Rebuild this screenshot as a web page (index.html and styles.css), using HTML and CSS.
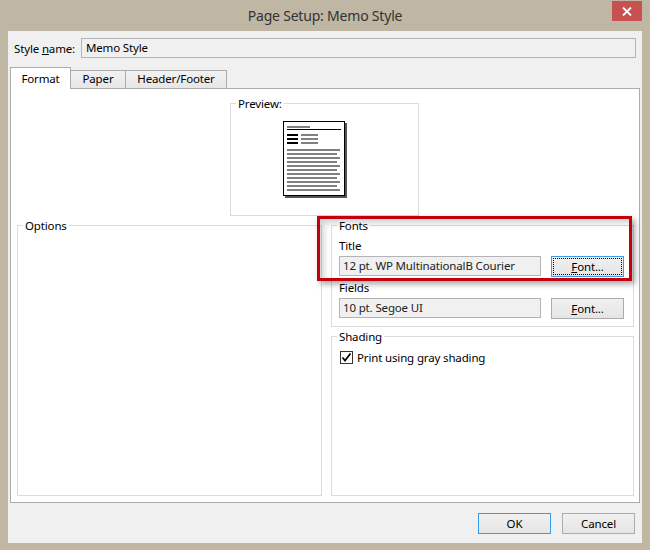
FILE: index.html
```html
<!DOCTYPE html>
<html>
<head>
<meta charset="utf-8">
<link rel="stylesheet" href="styles.css">
</head>
<body>
<div class="window">
  <div class="titlebar">
    <div class="title">Page Setup: Memo Style</div>
    <div class="close">
      <svg width="10" height="9" viewBox="0 0 10 9"><path d="M1 0.5 L9 8.5 M9 0.5 L1 8.5" stroke="#fff" stroke-width="1.8" fill="none"/></svg>
    </div>
  </div>
  <div class="client">
    <div class="style-row">
      <div class="style-label">Style <u>n</u>ame:</div>
      <div class="textbox style-box">Memo Style</div>
    </div>
    <div class="tabs">
      <div class="tab tab-format active">Format</div>
      <div class="tab tab-paper">Paper</div>
      <div class="tab tab-hf">Header/Footer</div>
    </div>
    <div class="panel">
      <fieldset class="group preview">
        <legend>Preview:</legend>
        <div class="group-body preview-body">
          <svg class="page-icon" width="64" height="77" viewBox="0 0 64 77">
            <rect x="2" y="2" width="62" height="75" fill="#555"/>
            <rect x="0.5" y="0.5" width="61" height="74" fill="#fff" stroke="#000" stroke-width="1"/>
            <rect x="4" y="5" width="23" height="2" fill="#808080"/>
            <rect x="4" y="8" width="54" height="1" fill="#000"/>
            <rect x="4" y="13" width="11" height="2" fill="#000"/>
            <rect x="4" y="17" width="11" height="2" fill="#000"/>
            <rect x="4" y="21" width="11" height="2" fill="#000"/>
            <rect x="18" y="13" width="17" height="2" fill="#808080"/>
            <rect x="18" y="17" width="17" height="2" fill="#808080"/>
            <rect x="18" y="21" width="17" height="2" fill="#808080"/>
            <rect x="4" y="28" width="53" height="2" fill="#808080"/>
            <rect x="4" y="32" width="50" height="2" fill="#808080"/>
            <rect x="4" y="36" width="53" height="2" fill="#808080"/>
            <rect x="4" y="40" width="50" height="2" fill="#808080"/>
            <rect x="4" y="44" width="53" height="2" fill="#808080"/>
            <rect x="4" y="48" width="50" height="2" fill="#808080"/>
            <rect x="4" y="52" width="53" height="2" fill="#808080"/>
            <rect x="4" y="56" width="50" height="2" fill="#808080"/>
            <rect x="4" y="60" width="53" height="2" fill="#808080"/>
            <rect x="4" y="64" width="50" height="2" fill="#808080"/>
            <rect x="4" y="68" width="53" height="2" fill="#808080"/>
          </svg>
        </div>
      </fieldset>
      <div class="cols">
        <fieldset class="group options">
          <legend>Options</legend>
        </fieldset>
        <div class="rightcol">
          <fieldset class="group fonts">
            <legend>Fonts</legend>
            <div class="group-body fonts-body">
              <div class="field-label">Title</div>
              <div class="font-row">
                <div class="textbox font-box">12 pt. WP MultinationalB Courier</div>
                <button class="btn focused"><span class="focus-ring"><u>F</u>ont...</span></button>
              </div>
              <div class="field-label second">Fields</div>
              <div class="font-row">
                <div class="textbox font-box">10 pt. Segoe UI</div>
                <button class="btn"><span class="btn-text"><u>F</u>ont...</span></button>
              </div>
            </div>
          </fieldset>
          <fieldset class="group shading">
            <legend>Shading</legend>
            <div class="group-body shading-body">
              <div class="check-row">
                <span class="checkbox">
                  <svg width="11" height="11" viewBox="0 0 11 11"><path d="M1.5 5.5 L4 8.5 L9.5 1.5" stroke="#000" stroke-width="1.8" fill="none"/></svg>
                </span>
                <span class="check-label">Print using <u>g</u>ray shading</span>
              </div>
            </div>
          </fieldset>
        </div>
      </div>
      <div class="highlight"></div>
    </div>
    <div class="buttons">
      <button class="btn default"><span class="btn-text">OK</span></button>
      <button class="btn"><span class="btn-text">Cancel</span></button>
    </div>
  </div>
</div>
</body>
</html>
```

FILE: styles.css
```css
* { box-sizing: border-box; }
html, body { margin: 0; padding: 0; }
body {
  font-family: "Noto Sans", "Open Sans", sans-serif;
  font-size: 11.5px;
  letter-spacing: -0.15px;
  color: #000;
  background: #bfb6a3;
}
.window {
  width: 650px;
  height: 550px;
  background: #bfb6a3;
  padding: 0 8px 7px 8px;
  display: flex;
  flex-direction: column;
}
.titlebar {
  height: 31px;
  flex: none;
  display: grid;
  grid-template-columns: 1fr auto 1fr;
}
.title {
  grid-column: 2;
  font-size: 14px;
  letter-spacing: -0.2px;
  line-height: 31px;
  color: #333;
}
.close {
  grid-column: 3;
  justify-self: end;
  align-self: start;
  margin-top: 1px;
  width: 30px;
  height: 20px;
  background: #c75050;
  display: flex;
  align-items: center;
  justify-content: center;
}
.close svg { display: block; }
.client {
  flex: 1;
  background: #f0f0f0;
  padding-top: 7px;
  display: flex;
  flex-direction: column;
}
.style-row {
  display: flex;
  align-items: center;
  margin: 0 6px;
}
.style-label { width: 67px; flex: none; }
.textbox {
  height: 20px;
  border: 1px solid #b4b4b4;
  background: #f0f0f0;
  padding: 0 4px;
  line-height: 18px;
  white-space: nowrap;
  overflow: hidden;
}
.style-box { flex: 1; }
.tabs {
  display: flex;
  align-items: flex-end;
  margin: 9px 2px 0;
}
.tab {
  height: 18px;
  border: 1px solid #acacac;
  border-bottom: none;
  background: linear-gradient(#f2f2f2, #e6e6e6);
  text-align: center;
  line-height: 16px;
  margin-left: -1px;
}
.tab.active {
  height: 22px;
  margin-left: 0;
  margin-bottom: -1px;
  background: #fff;
  line-height: 21px;
  position: relative;
  z-index: 1;
}
.tab-format { width: 61px; }
.tab-paper { width: 56px; }
.tab-hf { width: 102px; }
.panel {
  flex: none;
  height: 415px;
  margin: 0 2px;
  border: 1px solid #acacac;
  background: #fff;
  padding: 7px 5px 6px 6px;
  position: relative;
  display: flex;
  flex-direction: column;
}
fieldset.group {
  margin: 0;
  padding: 0;
  border: 1px solid #dcdcdc;
  min-width: 0;
}
fieldset.group legend {
  padding: 0 2px;
  margin-left: 5px;
  line-height: 15px;
}
fieldset.preview {
  width: 189px;
  align-self: flex-start;
  margin-left: 213px;
}
.preview-body { padding: 10px 0 17px 52px; }
.page-icon { display: block; }
.cols {
  flex: 1;
  margin-top: 2px;
  display: grid;
  grid-template-columns: 305px 303px;
  column-gap: 9px;
}
.rightcol {
  display: flex;
  flex-direction: column;
}
.fonts-body { padding: 5px 9px 7px 7px; }
.field-label { line-height: 15px; }
.field-label.second { margin-top: 3px; }
.font-row {
  display: flex;
  gap: 10px;
  margin-top: 3px;
  align-items: flex-start;
}
.font-box { flex: 1; padding-left: 3px; color: #222; }
fieldset.shading {
  flex: 1;
  margin-top: 2px;
}
.shading-body { padding: 7px 7px 0 8px; }
.check-row {
  display: flex;
  align-items: center;
  gap: 4px;
}
.checkbox {
  width: 13px;
  height: 13px;
  flex: none;
  border: 1px solid #333;
  background: #fff;
  display: flex;
  align-items: center;
  justify-content: center;
}
.checkbox svg { display: block; }
.check-label { line-height: 13px; }
.btn {
  width: 73px;
  height: 21px;
  flex: none;
  padding: 0;
  border: 1px solid #acacac;
  background: linear-gradient(#f0f0f0, #e5e5e5);
  font-family: inherit;
  font-size: 11.5px;
  letter-spacing: -0.15px;
  color: #000;
  display: flex;
}
.btn-text, .focus-ring {
  flex: 1;
  margin: 1px;
  display: flex;
  align-items: center;
  justify-content: center;
  border: 1px solid transparent;
}
.focus-ring { border: 1px dotted #000; }
.btn.focused, .btn.default { border-color: #3c9be8; }
.highlight {
  position: absolute;
  left: 306px;
  top: 127px;
  width: 315px;
  height: 65px;
  border: 3px solid #c4000c;
  box-shadow: 3px 3px 6px rgba(0,0,0,0.35), inset 4px 4px 6px rgba(0,0,0,0.18);
  pointer-events: none;
}
.buttons {
  display: flex;
  justify-content: flex-end;
  gap: 11px;
  margin-top: 10px;
  padding-right: 7px;
}
```
